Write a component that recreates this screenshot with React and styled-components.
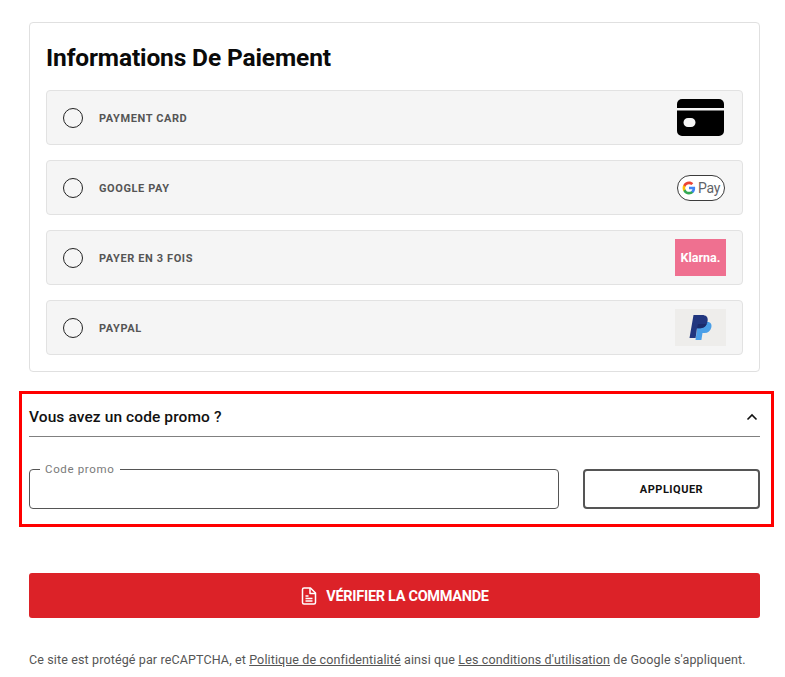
import React from 'react';
import styled, { createGlobalStyle } from 'styled-components';

const GlobalStyle = createGlobalStyle`
  html, body {
    margin: 0;
    padding: 0;
    background: #fff;
    overflow: hidden;
  }
  * { box-sizing: border-box; }
  body {
    font-family: Roboto, "Liberation Sans", sans-serif;
    color: #000;
  }
`;

const Page = styled.div`
  width: 785px;
  height: 677px;
  padding: 22px 25px 0 29px;
`;

const Card = styled.section`
  width: 731px;
  height: 350px;
  border: 1px solid #e0e0e0;
  border-radius: 4px;
  padding: 18px 16px 0;
`;

const Title = styled.h2`
  margin: 0 0 16px;
  height: 33px;
  font-size: 24.5px;
  line-height: 33px;
  font-weight: 700;
  letter-spacing: -0.13px;
  color: #0a0a0a;
`;

const Methods = styled.div`
  display: flex;
  flex-direction: column;
  gap: 15px;
`;

const Method = styled.label`
  display: flex;
  align-items: center;
  height: 55px;
  padding: 0 16px;
  background: #f5f5f5;
  border: 1px solid #e2e2e2;
  border-radius: 4px;
`;

const Radio = styled.span`
  width: 20px;
  height: 20px;
  flex: none;
  border: 1px solid #222;
  border-radius: 50%;
  margin-right: 16px;
`;

const MethodName = styled.span`
  flex: 1;
  padding-top: 2px;
  font-size: 11px;
  font-weight: 700;
  letter-spacing: 0.6px;
  color: #555;
`;

const CardIcon = styled.svg`
  width: 47px;
  height: 37px;
  margin-right: 2px;
  display: block;
`;

const GooglePill = styled.span`
  display: flex;
  align-items: center;
  justify-content: center;
  gap: 2px;
  width: 48px;
  height: 26px;
  margin-right: 1px;
  border: 1px solid #3c3c3c;
  border-radius: 13px;
  background: #fff;
  font-size: 14px;
  letter-spacing: -0.3px;
  color: #5f6368;
`;

const BrandTile = styled.span`
  display: flex;
  align-items: center;
  justify-content: center;
  width: 51px;
  height: 37px;
  background: ${(p) => p.$bg};
  color: #fff;
  font-size: 12.5px;
  font-weight: 700;
`;

const PromoBox = styled.section`
  width: 755px;
  height: 136px;
  margin: 19px 0 0 -10px;
  padding: 0 11px 0 7px;
  border: 3px solid #f00;
`;

const PromoHeader = styled.div`
  display: flex;
  align-items: center;
  justify-content: space-between;
  height: 43px;
  padding: 4px 1px 0 0;
  border-bottom: 1px solid #808080;
  font-size: 15.5px;
  font-weight: 500;
  letter-spacing: 0.1px;
  color: #111;
`;

const PromoRow = styled.div`
  display: flex;
  align-items: flex-end;
  justify-content: space-between;
  margin-top: 24px;
`;

const Field = styled.fieldset`
  width: 530px;
  height: 48px;
  margin: 0;
  padding: 0 10px;
  border: 1px solid #555;
  border-radius: 4px;
`;

const FieldLegend = styled.legend`
  padding: 0 6px 0 5px;
  font-size: 11.5px;
  line-height: 16px;
  letter-spacing: 0.65px;
  color: #7a7a7a;
`;

const ApplyButton = styled.button`
  width: 177px;
  height: 40px;
  background: #fff;
  border: 2px solid #555;
  border-radius: 4px;
  font-family: inherit;
  font-size: 11px;
  font-weight: 700;
  letter-spacing: 0.5px;
  color: #111;
`;

const SubmitButton = styled.button`
  display: flex;
  align-items: center;
  justify-content: center;
  gap: 9px;
  width: 731px;
  height: 45px;
  margin-top: 46px;
  padding: 1px 0 0 1px;
  background: #dc2228;
  border: 0;
  border-radius: 3px;
  color: #fff;
  font-family: inherit;
  font-size: 14.5px;
  font-weight: 700;
  letter-spacing: -0.3px;
`;

const Legal = styled.p`
  margin: 33px 0 0;
  font-size: 12.5px;
  line-height: 18px;
  letter-spacing: 0.13px;
  color: #555;
  white-space: nowrap;

  a {
    color: inherit;
    text-decoration: underline;
  }
`;

const GoogleG = () => (
  <svg width="14" height="14" viewBox="0 0 48 48">
    <path fill="#4285F4" d="M45.1 24.5c0-1.600-.1-3.100-.4-4.500H24v8.500h11.800c-.5 2.800-2.100 5.100-4.400 6.700v5.600h7.100c4.200-3.800 6.600-9.500 6.600-16.300z" />
    <path fill="#34A853" d="M24 46c5.900 0 10.900-2 14.500-5.300l-7.100-5.600c-2 1.300-4.500 2.100-7.400 2.100-5.700 0-10.500-3.800-12.200-9H4.500v5.700C8.100 41.100 15.500 46 24 46z" />
    <path fill="#FBBC05" d="M11.800 28.200c-.4-1.300-.7-2.700-.7-4.200s.3-2.900.7-4.200v-5.700H4.500C3 17 2 20.400 2 24s1 7 2.500 9.900l7.300-5.700z" />
    <path fill="#EA4335" d="M24 10.800c3.200 0 6.100 1.100 8.400 3.300l6.300-6.300C34.900 4.200 29.900 2 24 2 15.500 2 8.100 6.900 4.500 14.100l7.300 5.700c1.700-5.200 6.500-9 12.200-9z" />
  </svg>
);

const PaypalMark = () => (
  <svg width="24" height="28" viewBox="0 0 24 28">
    <path fill="#4a9fe8" d="M9 8h9.500c3.500 0 4.500 2.500 3.800 5.500-.8 3.500-3.200 5.500-6.800 5.500h-2l-1.100 7H6.500z" />
    <path fill="#21367f" d="M4.500 1H13c4 0 6.300 2 5.600 6-.8 4.800-3.900 7.300-8 7.300H8l-1.400 9.700H0.500z" />
    <path fill="#1b2a6b" d="M9 10h8.600c-1 2.900-3.500 4.300-7 4.300H8z" />
  </svg>
);

const methods = [
  {
    name: 'PAYMENT CARD',
    logo: (
      <CardIcon viewBox="0 0 47 37">
        <path d="M5 0h37a5 5 0 0 1 5 5v4H0V5a5 5 0 0 1 5-5z" />
        <path fillRule="evenodd" d="M0 11.500h47V32a5 5 0 0 1-5 5H5a5 5 0 0 1-5-5zM11 19a4.500 4.500 0 0 0 0 9h3a4.500 4.500 0 0 0 0-9z" />
      </CardIcon>
    ),
  },
  {
    name: 'GOOGLE PAY',
    logo: (
      <GooglePill>
        <GoogleG />
        Pay
      </GooglePill>
    ),
  },
  { name: 'PAYER EN 3 FOIS', logo: <BrandTile $bg="#ef7090">Klarna.</BrandTile> },
  { name: 'PAYPAL', logo: <BrandTile $bg="#eeedeb"><PaypalMark /></BrandTile> },
];

export default function App() {
  return (
    <Page>
      <GlobalStyle />
      <Card>
        <Title>Informations De Paiement</Title>
        <Methods>
          {methods.map((m) => (
            <Method key={m.name}>
              <Radio />
              <MethodName>{m.name}</MethodName>
              {m.logo}
            </Method>
          ))}
        </Methods>
      </Card>

      <PromoBox>
        <PromoHeader>
          Vous avez un code promo ?
          <svg width="14" height="14" viewBox="0 0 14 14" fill="none" stroke="#111" strokeWidth="1.6">
            <path d="M2.500 9.500 7 5l4.500 4.500" />
          </svg>
        </PromoHeader>
        <PromoRow>
          <Field>
            <FieldLegend>Code promo</FieldLegend>
          </Field>
          <ApplyButton>APPLIQUER</ApplyButton>
        </PromoRow>
      </PromoBox>

      <SubmitButton>
        <svg width="16" height="18" viewBox="0 0 16 18" fill="none" stroke="#fff" strokeWidth="1.5" strokeLinejoin="round">
          <path d="M3 1h6.500L14.500 6v9.500a1.500 1.500 0 0 1-1.500 1.500H3a1.500 1.500 0 0 1-1.500-1.500v-13A1.500 1.500 0 0 1 3 1z" />
          <path d="M9 1v5.500h5.500M4.500 9h3M4.500 11.500h7M4.500 14h7" />
        </svg>
        VÉRIFIER LA COMMANDE
      </SubmitButton>

      <Legal>
        Ce site est protégé par reCAPTCHA, et <a href="#">Politique de confidentialité</a> ainsi que{' '}
        <a href="#">Les conditions d'utilisation</a> de Google s'appliquent.
      </Legal>
    </Page>
  );
}
